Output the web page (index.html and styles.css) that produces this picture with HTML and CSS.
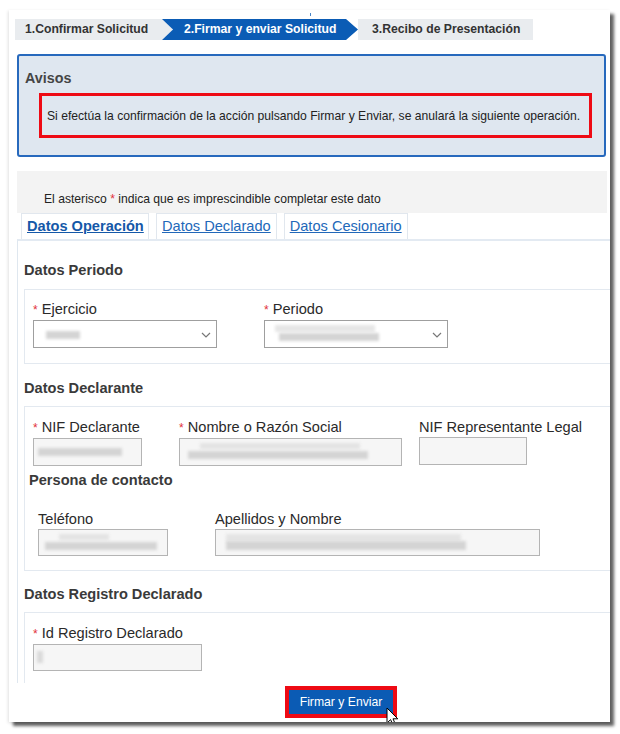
FILE: index.html
```html
<!DOCTYPE html>
<html lang="es">
<head>
<meta charset="utf-8">
<title>Firmar y enviar Solicitud</title>
<link rel="stylesheet" href="styles.css">
</head>
<body>
<div class="window">
  <span class="tick"></span>
  <div class="steps">
    <div class="step step-1">1.Confirmar Solicitud</div>
    <div class="step step-2">2.Firmar y enviar Solicitud</div>
    <div class="step step-3">3.Recibo de Presentación</div>
  </div>

  <div class="avisos">
    <div class="avisos-title">Avisos</div>
    <div class="avisos-msg">Si efectúa la confirmación de la acción pulsando Firmar y Enviar, se anulará la siguiente operación.</div>
  </div>

  <div class="form">
    <div class="form-head">El asterisco <span class="req">*</span> indica que es imprescindible completar este dato</div>
    <div class="tabs">
      <a class="tab active">Datos Operación</a>
      <a class="tab">Datos Declarado</a>
      <a class="tab">Datos Cesionario</a>
    </div>
    <div class="tab-body">
      <h3 class="sec-title">Datos Periodo</h3>
      <div class="fieldset fs-periodo">
        <div class="row row-periodo">
          <div class="field">
            <label><span class="req">*</span> Ejercicio</label>
            <div class="select"><span class="blur b-ej"></span><svg class="chev" width="10" height="6" viewBox="0 0 10 6"><path d="M1 1 L5 5 L9 1" fill="none" stroke="#777" stroke-width="1.2"/></svg></div>
          </div>
          <div class="field">
            <label><span class="req">*</span> Periodo</label>
            <div class="select"><span class="blur b-per1"></span><span class="blur b-per2"></span><svg class="chev" width="10" height="6" viewBox="0 0 10 6"><path d="M1 1 L5 5 L9 1" fill="none" stroke="#777" stroke-width="1.2"/></svg></div>
          </div>
        </div>
      </div>

      <h3 class="sec-title t2">Datos Declarante</h3>
      <div class="fieldset fs-decl">
        <div class="row row-decl">
          <div class="field f-nif">
            <label><span class="req">*</span> NIF Declarante</label>
            <div class="input w-nif"><span class="blur b-nif"></span></div>
          </div>
          <div class="field f-nom">
            <label><span class="req">*</span> Nombre o Razón Social</label>
            <div class="input w-nom"><span class="blur b-nom1"></span><span class="blur b-nom2"></span></div>
          </div>
          <div class="field f-rep">
            <label>NIF Representante Legal</label>
            <div class="input w-rep"></div>
          </div>
        </div>
        <div class="contact-title">Persona de contacto</div>
        <div class="row row-contact">
          <div class="field f-tel">
            <label>Teléfono</label>
            <div class="input w-tel"><span class="blur b-tel1"></span><span class="blur b-tel2"></span></div>
          </div>
          <div class="field">
            <label>Apellidos y Nombre</label>
            <div class="input w-ape"><span class="blur b-ape1"></span><span class="blur b-ape2"></span></div>
          </div>
        </div>
      </div>

      <h3 class="sec-title t3">Datos Registro Declarado</h3>
      <div class="fieldset fs-reg">
        <div class="field">
          <label><span class="req">*</span> Id Registro Declarado</label>
          <div class="input w-id"><span class="blur b-id"></span></div>
        </div>
      </div>
    </div>
  </div>

  <div class="actions">
    <button class="btn">Firmar y Enviar</button>
    <svg class="cursor" width="14" height="20" viewBox="0 0 14 20"><path d="M1 1 L1 16 L4.6 12.6 L7.2 18.6 L9.6 17.6 L7 11.8 L11.8 11.8 Z" fill="#fff" stroke="#000" stroke-width="1" stroke-linejoin="round"/></svg>
  </div>
</div>
</body>
</html>
```

FILE: styles.css
```css
* { box-sizing: border-box; }
html, body { margin: 0; padding: 0; background: #fff; }
body {
  font-family: "Liberation Sans", Arial, sans-serif;
  color: #222;
  width: 620px;
  height: 734px;
  overflow: hidden;
}
.window {
  position: relative;
  margin: 10px 0 0 9px;
  width: 601px;
  height: 712px;
  background: #fff;
  box-shadow: 4px 4px 3px rgba(0,0,0,0.62), -1px 1px 3px rgba(0,0,0,0.12);
  overflow: hidden;
  padding-top: 9px;
}
.tick {
  position: absolute;
  left: 301px;
  top: 3px;
  width: 1px;
  height: 3px;
  background: #4a86c8;
}

/* steps */
.steps {
  display: flex;
  height: 21px;
  margin-left: 6px;
}
.step {
  height: 21px;
  line-height: 21px;
  font-size: 12.2px;
  font-weight: bold;
  white-space: nowrap;
  color: #333;
}
.step-1 {
  width: 157px;
  background: #e9ecef;
  padding-left: 10px;
}
.step-2 {
  width: 196px;
  margin-left: -10px;
  background: #0b5cb5;
  color: #fff;
  padding-left: 22px;
  clip-path: polygon(0 0, 184px 0, 196px 50%, 184px 100%, 0 100%, 11px 50%);
  position: relative;
}
.step-3 {
  width: 175px;
  background: #e9ecef;
  padding-left: 14px;
}

/* avisos */
.avisos {
  margin: 14px 4px 0 8px;
  height: 103px;
  border: 2px solid #2769bd;
  border-radius: 3px;
  background: #dfe7f0;
  padding: 14px 12px 0 6px;
}
.avisos-title {
  font-size: 14.3px;
  font-weight: bold;
  line-height: 16px;
  color: #454545;
}
.avisos-msg {
  margin: 7px 0 0 14px;
  height: 45px;
  border: 3px solid #ee0a14;
  font-size: 12.15px;
  line-height: 40px;
  padding-left: 5px;
  color: #222;
  white-space: nowrap;
}

/* form */
.form {
  margin: 14px 0 0 8px;
}
.form-head {
  height: 42px;
  margin-right: 3px;
  background: #f3f3f3;
  font-size: 12.15px;
  line-height: 14px;
  padding: 21px 0 0 27px;
  color: #222;
}
.req { color: #e2313a; }
.tabs {
  display: flex;
  gap: 7px;
  height: 26px;
  padding: 0 0 0 4px;
}
.tab {
  display: block;
  height: 26px;
  border: 1px solid #e1e7ee;
  border-bottom: 0;
  padding: 4px 5px 0 5px;
  font-size: 14.6px;
  line-height: 17px;
  color: #2268b9;
  text-decoration: underline;
  white-space: nowrap;
}
.tab.active {
  font-weight: bold;
  color: #1458a8;
  width: 128px;
}
.tab-body {
  border-top: 2px solid #e3eaf2;
  border-left: 1px solid #dfe7ef;
  padding: 19px 0 5px 6px;
  height: 444px;
  overflow: hidden;
}
.sec-title {
  margin: 0;
  font-size: 14.6px;
  font-weight: bold;
  line-height: 20px;
  color: #3a3a3a;
}
.sec-title.t2 { margin-top: 14px; }
.sec-title.t3 { margin-top: 13px; }
.fieldset {
  margin-top: 9px;
  margin-right: -20px;
  border: 1px solid #e3e9f0;
  padding-left: 8px;
}
.fs-periodo { height: 75px; padding-top: 11px; }
.fs-decl { margin-top: 8px; height: 165px; padding-top: 12px; }
.fs-reg { margin-top: 8px; height: 80px; padding-top: 12px; border-bottom: 0; }

.row { display: flex; }
.row-periodo { gap: 47px; }
.field label {
  display: block;
  font-size: 14.6px;
  line-height: 16px;
  color: #2a2a2a;
  white-space: nowrap;
  margin-bottom: 2px;
}
.field label .req { font-size: 12px; }
.select {
  position: relative;
  width: 184px;
  height: 28px;
  border: 1px solid #9f9f9f;
  background: #fff;
}
.chev {
  position: absolute;
  right: 5px;
  top: 11px;
}
.input {
  position: relative;
  height: 28px;
  border: 1px solid #b4b4b4;
  background: #f6f6f6;
}
.blur {
  position: absolute;
  background: #d4d4d4;
  filter: blur(1.6px);
  height: 8px;
}
.b-ej { left: 12px; top: 10px; width: 34px; }
.b-per1 { left: 10px; top: 4px; width: 100px; height: 7px; background: #e6e6e6; }
.b-per2 { left: 14px; top: 12px; width: 100px; }

.f-nif { width: 146px; }
.f-nom { width: 240px; }
.w-nif { width: 109px; }
.w-nom { width: 223px; }
.w-rep { width: 108px; }
.b-nif { left: 4px; top: 9px; width: 84px; }
.b-nom1 { left: 20px; top: 4px; width: 160px; height: 6px; background: #e3e3e3; }
.b-nom2 { left: 8px; top: 12px; width: 180px; }

.contact-title {
  margin: 6px 0 0 -4px;
  font-size: 14.6px;
  font-weight: bold;
  line-height: 16px;
  color: #3a3a3a;
}
.row-contact { margin-top: 23px; padding-left: 5px; }
.f-tel { width: 177px; }
.w-tel { width: 130px; height: 27px; }
.w-ape { width: 325px; height: 27px; }
.b-tel1 { left: 20px; top: 4px; width: 50px; height: 6px; background: #e3e3e3; }
.b-tel2 { left: 6px; top: 12px; width: 112px; }
.b-ape1 { left: 10px; top: 4px; width: 235px; height: 7px; background: #e4e4e4; }
.b-ape2 { left: 10px; top: 11px; width: 240px; height: 9px; }
.w-id { width: 169px; height: 27px; }
.b-id { left: 3px; top: 6px; width: 6px; height: 12px; background: #dadada; }

/* actions */
.actions {
  position: relative;
  margin: 3px 0 0 276px;
  height: 32px;
}
.btn {
  display: block;
  width: 112px;
  height: 32px;
  border: 4px solid #ee0a14;
  background: #0b5bb4;
  color: #fff;
  font-family: "Liberation Sans", Arial, sans-serif;
  font-size: 12.2px;
  padding: 0;
  margin: 0;
}
.cursor {
  position: absolute;
  left: 101px;
  top: 21px;
}
```
